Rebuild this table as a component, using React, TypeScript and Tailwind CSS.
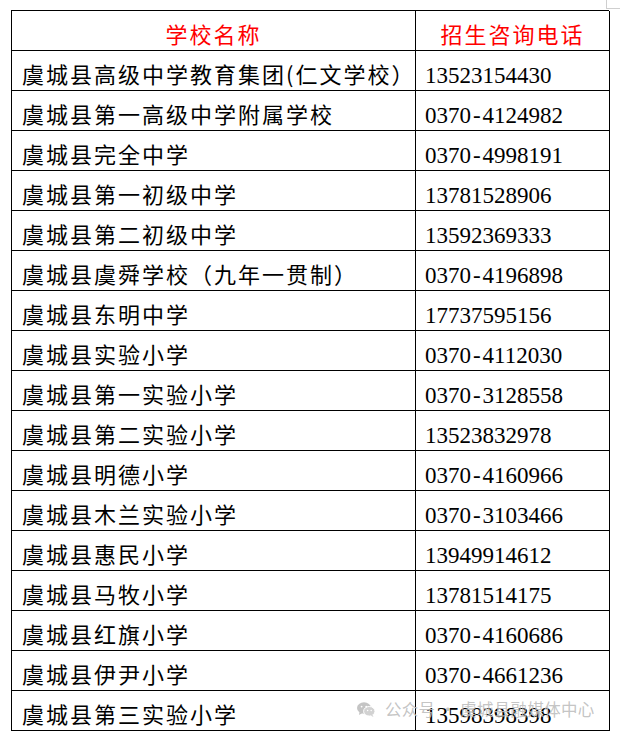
const schools: [string, string][] = [
  ["虞城县高级中学教育集团(仁文学校）", "13523154430"],
  ["虞城县第一高级中学附属学校", "0370-4124982"],
  ["虞城县完全中学", "0370-4998191"],
  ["虞城县第一初级中学", "13781528906"],
  ["虞城县第二初级中学", "13592369333"],
  ["虞城县虞舜学校（九年一贯制）", "0370-4196898"],
  ["虞城县东明中学", "17737595156"],
  ["虞城县实验小学", "0370-4112030"],
  ["虞城县第一实验小学", "0370-3128558"],
  ["虞城县第二实验小学", "13523832978"],
  ["虞城县明德小学", "0370-4160966"],
  ["虞城县木兰实验小学", "0370-3103466"],
  ["虞城县惠民小学", "13949914612"],
  ["虞城县马牧小学", "13781514175"],
  ["虞城县红旗小学", "0370-4160686"],
  ["虞城县伊尹小学", "0370-4661236"],
  ["虞城县第三实验小学", "13598398398"],
];

const cjk = "font-['Noto_Sans_CJK_SC',sans-serif]";

// 電話號碼的連字號在原圖是全形寬度
function Phone({ value }: { value: string }) {
  const parts = value.split("-");
  if (parts.length === 1) return <>{value}</>;
  return (
    <>
      {parts[0]}
      <span className="inline-block w-[11.5px] text-center">-</span>
      {parts[1]}
    </>
  );
}

function WeChatIcon() {
  return (
    <svg width="18" height="15" viewBox="0 0 18 15" fill="#c4c4c4">
      <ellipse cx="7" cy="6" rx="7" ry="5.8" />
      <path d="M2.5 10 L2 13 L5.5 11 Z" />
      <ellipse cx="12.3" cy="9.3" rx="5.7" ry="4.8" fill="#d2d2d2" stroke="#fff" strokeWidth="1" />
      <path d="M15.5 13 L16.5 15 L13.5 13.6 Z" fill="#d2d2d2" />
      <circle cx="4.6" cy="4.6" r="0.9" fill="#fff" />
      <circle cx="9.2" cy="4.6" r="0.9" fill="#fff" />
      <circle cx="10.6" cy="8.4" r="0.75" fill="#fff" />
      <circle cx="14.2" cy="8.4" r="0.75" fill="#fff" />
    </svg>
  );
}

export default function App() {
  return (
    <div className="relative w-[620px] h-[733px] bg-white overflow-hidden">
      {/* 右上角的裁切標記 */}
      <div className="absolute left-[606px] top-0 w-px h-[8px] bg-[#cfcfcf]" />
      <div className="absolute left-[606px] top-[8px] w-[14px] h-px bg-[#cfcfcf]" />

      <div className="pt-[10px] pl-[11px]">
        <div className="grid grid-cols-[404px_194px] w-[598px] border-t border-l border-black">
          <div
            className={`h-[40px] flex items-center justify-center pt-[6px] border-r border-b border-black text-[22px] tracking-[2px] text-[#ff0000] ${cjk}`}
          >
            学校名称
          </div>
          <div
            className={`h-[40px] flex items-center justify-center pt-[6px] border-r border-b border-black text-[22px] tracking-[2px] text-[#ff0000] ${cjk}`}
          >
            招生咨询电话
          </div>

          {schools.map(([name, phone]) => (
            <div key={name} className="contents">
              <div
                className={`h-[40px] flex items-center pl-[10px] pt-[6px] border-r border-b border-black text-[22px] tracking-[2px] text-black whitespace-nowrap ${cjk}`}
              >
                {name}
              </div>
              <div className="h-[40px] flex items-center pl-[9px] pt-[11px] border-r border-b border-black text-[23px] text-black font-['Liberation_Serif',serif] whitespace-nowrap">
                <Phone value={phone} />
              </div>
            </div>
          ))}
        </div>
      </div>

      {/* 公眾號浮水印 */}
      <div
        className={`absolute left-[357px] top-[697px] flex items-center gap-[10px] text-[16.5px] text-[#bdbdbd]/90 ${cjk} pointer-events-none`}
      >
        <WeChatIcon />
        <span className="tracking-[0.3px]">公众号 · 虞城县融媒体中心</span>
      </div>
    </div>
  );
}
